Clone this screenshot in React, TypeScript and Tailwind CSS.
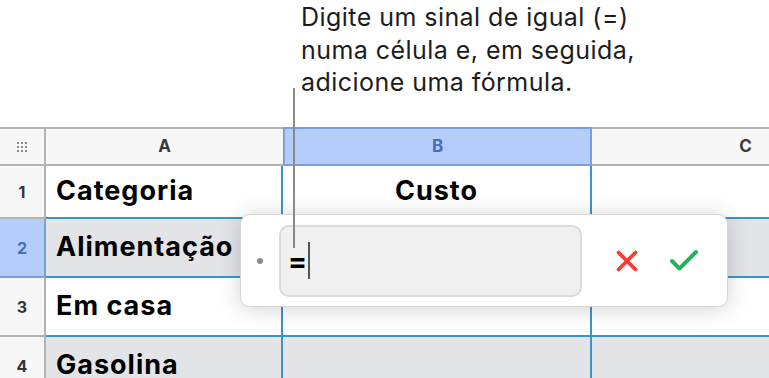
import { X, Check } from 'lucide-react'

const FONT = { fontFamily: 'Inter, "Noto Sans", sans-serif' }

const COLS = ['w-[46px]', 'w-[237px]', 'w-[309px]', 'w-[309px]']

type Row = { n: number; a: string; b: string; banded: boolean; active?: boolean; h: string }

const ROWS: Row[] = [
  { n: 1, a: 'Categoria', b: 'Custo', banded: false, h: 'h-[53px]' },
  { n: 2, a: 'Alimentação', b: '', banded: true, active: true, h: 'h-[59px]' },
  { n: 3, a: 'Em casa', b: '', banded: false, h: 'h-[59px]' },
  { n: 4, a: 'Gasolina', b: '', banded: true, h: 'h-[59px]' }
]

function GripIcon() {
  return (
    <svg width="12" height="12" viewBox="0 0 12 12" fill="#8a8a8a">
      {[1, 5, 9].map((y) =>
        [1, 5, 9].map((x) => <rect key={`${x}-${y}`} x={x} y={y} width="2" height="2" />)
      )}
    </svg>
  )
}

export default function App() {
  return (
    <div className="relative h-[378px] w-[769px] overflow-hidden bg-white" style={FONT}>
      {/* callout */}
      <div className="h-[127px] pl-[301px] pt-[1px] text-[25px] leading-[32.5px] tracking-[0.45px] text-[#1c1c1c]">
        <p>Digite um sinal de igual (=)</p>
        <p>numa célula e, em seguida,</p>
        <p>adicione uma fórmula.</p>
      </div>

      {/* table */}
      <div className="flex w-[910px] flex-col">
        <div className="flex h-[39px] text-[17px] font-bold">
          <div className={`${COLS[0]} flex items-center justify-center border-y-2 border-r-2 border-[#b3b3b3] bg-[#f7f7f7]`}>
            <GripIcon />
          </div>
          <div className={`${COLS[1]} flex items-center justify-center border-y-2 border-[#b3b3b3] bg-[#f7f7f7] text-[#3a3a3a]`}>
            A
          </div>
          <div className={`${COLS[2]} flex items-center justify-center border-2 border-[#7e9ed8] bg-[#b5cdfa] text-[#4a6cb6]`}>
            B
          </div>
          <div className={`${COLS[3]} flex items-center justify-center border-y-2 border-r-2 border-[#b3b3b3] bg-[#f7f7f7] text-[#3a3a3a]`}>
            C
          </div>
        </div>

        {ROWS.map((r) => (
          <div key={r.n} className={`flex ${r.h} ${r.banded ? 'bg-[#e3e4e8]' : 'bg-white'}`}>
            <div
              className={`${COLS[0]} flex items-center justify-center border-b-2 border-r-2 text-[16px] font-bold ${
                r.active
                  ? 'border-[#7e9ed8] bg-[#b5cdfa] text-[#4a6cb6]'
                  : 'border-[#b3b3b3] bg-[#f7f7f7] text-[#333]'
              }`}
            >
              {r.n}
            </div>
            <div className={`${COLS[1]} flex items-center whitespace-nowrap border-b-2 border-r-2 border-[#3d94cb] pl-[10px] text-[27px] font-bold tracking-[1px] text-black`}>
              {r.a}
            </div>
            <div className={`${COLS[2]} flex items-center justify-center border-b-2 border-r-2 border-[#3d94cb] text-[27px] font-bold tracking-[1px] text-black`}>
              {r.b}
            </div>
            <div className={`${COLS[3]} border-b-2 border-r-2 border-[#3d94cb]`} />
          </div>
        ))}
      </div>

      {/* formula editor */}
      <div className="absolute left-[240px] top-[214px] flex h-[93px] w-[488px] items-center rounded-[10px] border border-[#d6d6d6] bg-white shadow-[0_2px_22px_rgba(0,0,0,0.18)]">
        <div className="ml-[16px] h-[6px] w-[6px] rounded-full bg-[#8c8c8c]" />
        <div className="ml-[16px] flex h-[72px] w-[303px] items-center rounded-[10px] border-2 border-[#dadada] bg-[#f0f0f0] pl-[7px]">
          <span className="text-[28px] font-bold leading-none text-black">=</span>
          <span className="ml-[1px] h-[37px] w-[2px] bg-[#555]" />
        </div>
        <X className="ml-[28px] text-[#ff3b2f]" size={34} strokeWidth={2.6} />
        <Check className="ml-[22px] text-[#1fb35c]" size={36} strokeWidth={2.6} />
      </div>

      {/* leader line */}
      <div className="absolute left-[293px] top-[88px] h-[160px] w-[2px] bg-[#8a8a8a]" />
    </div>
  )
}
